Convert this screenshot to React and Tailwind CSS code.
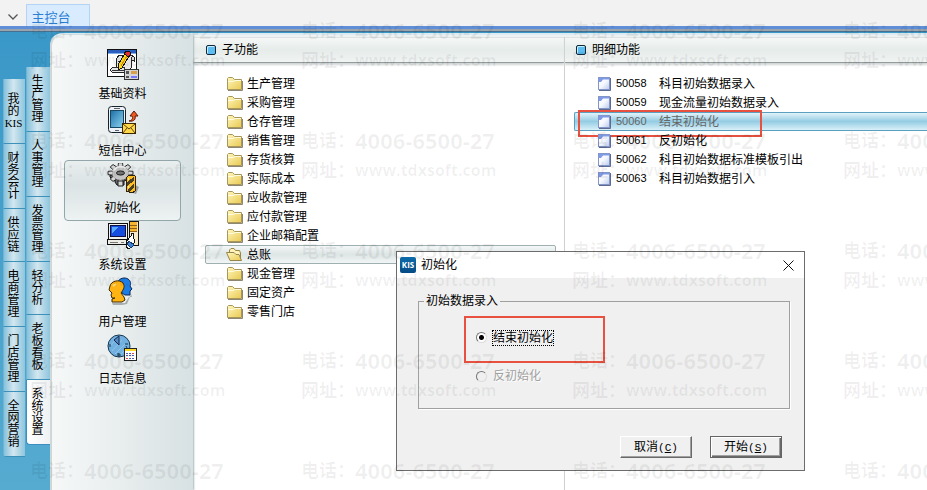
import React from "react";

const outerTabs = [
  ["我", "的", "KIS"],
  ["财", "务", "会", "计"],
  ["供", "应", "链"],
  ["电", "商", "管", "理"],
  ["门", "店", "管", "理"],
  ["全", "网", "营", "销"],
];

const innerTabs = ["生产管理", "人事管理", "发票管理", "轻分析", "老板看板", "系统设置"];

const folders = [
  "生产管理", "采购管理", "仓存管理", "销售管理", "存货核算", "实际成本", "应收款管理",
  "应付款管理", "企业邮箱配置", "总账", "现金管理", "固定资产", "零售门店",
];

const details = [
  ["50058", "科目初始数据录入"],
  ["50059", "现金流量初始数据录入"],
  ["50060", "结束初始化"],
  ["50061", "反初始化"],
  ["50062", "科目初始数据标准模板引出"],
  ["50063", "科目初始数据引入"],
];

function BasicDataIcon() {
  return (
    <svg width="32" height="32" viewBox="0 0 32 32" shapeRendering="crispEdges">
      <rect x="0.5" y="0.5" width="29" height="27" fill="#fff" stroke="#111" />
      <rect x="1" y="1" width="28" height="3" fill="#2a5fc0" />
      <path d="M1 4.500H29" stroke="#86aee6" />
      <path d="M12 6H24L27 8V12L24 11V19L21 23H5L3 21L6 18H9V11Z" fill="#e6e6e6" stroke="#222" />
      <path d="M6 18H18L17 21H5M24 11V8M11 12H14M11 15H13" fill="none" stroke="#333" />
      <path d="M18 4L22 7L15 19L11 21V16Z" fill="#ffdc18" stroke="#111" />
      <path d="M20 7L14 17" stroke="#e48f10" />
      <path d="M19 2H22L24 4L22 8L17 5Z" fill="#e03030" stroke="#111" />
      <rect x="17.500" y="20.500" width="14" height="10" fill="#d4d4d4" stroke="#333" />
      <rect x="19" y="22" width="3" height="3" fill="#555" />
      <rect x="24" y="22" width="6" height="3" fill="#d9a04a" />
      <rect x="19" y="27" width="3" height="2" fill="#555" />
      <rect x="24" y="27" width="6" height="2" fill="#7777ff" />
    </svg>
  );
}

function MessageIcon() {
  return (
    <svg width="32" height="32" viewBox="0 0 32 32">
      <defs>
        <linearGradient id="phoneScreen" x1="0" y1="0" x2="1" y2="1">
          <stop offset="0" stopColor="#1b6fa6" />
          <stop offset="1" stopColor="#8fd4f2" />
        </linearGradient>
      </defs>
      <rect x="1.500" y=".500" width="17" height="26" rx="3" fill="#eef2f6" stroke="#18222c" />
      <rect x="3.500" y="4.500" width="13" height="17" fill="url(#phoneScreen)" stroke="#174663" />
      <path d="M7 2.500H13M8 24.500H12" stroke="#59636d" />
      <path d="M22 15C26 14 26 12 25 10H23L27 5L31 10H28C29 13 27 16 22 15Z" fill="#f05a1a" stroke="#5d1808" />
      <rect x="15.500" y="17.500" width="13" height="10" fill="#ffd84a" stroke="#3b2604" />
      <path d="M16 18L22 23L28 18M16 27L20 22M28 27L24 22" fill="none" stroke="#62430b" />
    </svg>
  );
}

const gearTeeth = [0, 45, 90, 135, 180, 225, 270, 315];

function GearIcon() {
  return (
    <svg width="32" height="32" viewBox="0 0 32 32">
      <path d="M24 20L32 24L29 31L23 29Z" fill="#99a2a5" />
      <path d="M3 12V14L6 17L8 16V19L10 22H17V18L25 15V12Z" fill="#666" stroke="#111" />
      <g transform="translate(13.500 10) scale(1 .82)">
        {gearTeeth.map((angle) => (
          <path key={angle} transform={`rotate(${angle})`} d="M-2.500 -8L-2 -12.500H2L2.500 -8Z" fill="#d6d6d6" stroke="#222" />
        ))}
        <circle r="8.500" fill="#c4c4c4" />
        <path d="M-7 -3A8 8 0 0 1 5 -6" fill="none" stroke="#f0f0f0" strokeWidth="2" />
        <ellipse rx="4" ry="2.500" fill="#777" stroke="#111" />
      </g>
      <path d="M11 18H16V23H11Z" fill="#d4d4d4" stroke="#222" />
      <g shapeRendering="crispEdges">
        <path d="M19 15L22 12L28 13V28L25 30L19 28Z" fill="#ffbd24" stroke="#2c210b" />
        <path d="M20 19L27 14V18L20 23ZM20 27L27 21V25L22 29Z" fill="#4c3e25" />
        <path d="M21.500 15V17M21.500 23V25" stroke="#fff08a" />
      </g>
    </svg>
  );
}

function ComputerIcon() {
  return (
    <svg width="32" height="32" viewBox="0 0 32 32" shapeRendering="crispEdges">
      <path d="M22 1H31V25H22Z" fill="#f5e9ca" stroke="#161616" />
      <path d="M23 2H30V12H23Z" fill="#f7b52f" />
      <path d="M23 5.500H30M23 8.500H30M23 11.500H30" stroke="#8c5d13" />
      <rect x="1.500" y="3.500" width="19" height="16" fill="#f2f2ec" stroke="#111" />
      <rect x="3.500" y="5.500" width="15" height="11" fill="#164fe0" stroke="#101044" />
      <path d="M5 7H12L5 13Z" fill="#54a8ff" />
      <rect x="0.500" y="19.500" width="19" height="5" fill="#ecece5" stroke="#111" />
      <path d="M3 22.500H11M14 22.500H17" stroke="#777" />
      <path d="M24 13V16L22 18L19 23V27L22 29L26 26L28 20L26 18V13Z" fill="#fff" stroke="#111" />
      <path d="M22 21L27 25L24 28L20 24Z" fill="#4388dd" stroke="#163b67" />
    </svg>
  );
}

function UsersIcon() {
  return (
    <svg width="32" height="32" viewBox="0 0 32 32">
      <path d="M5 26H18L22 20H25L24 17L22 22L20 27L15 28H6Z" fill="#8b9496" opacity=".7" />
      <path d="M11 5C12 1 18 0 21 2C24 4 24 7 23 9L25 12L23 14V18H18L15 16Z" fill="#1c7de4" stroke="#0b2656" />
      <path d="M3 9C4 4 12 2 16 6C18 9 17 12 14 16L17 20L18 23L15 25H5V22L8 21H5L4 18L5 16L2 13Z" fill="#ffb414" stroke="#3d2a04" />
      <path d="M6 9L9 7" stroke="#ffe184" strokeWidth="2" />
    </svg>
  );
}

function LogIcon() {
  return (
    <svg width="32" height="32" viewBox="0 0 32 32">
      <circle cx="12" cy="12" r="11" fill="#72b1df" stroke="#17364f" />
      <path d="M4 11L10 4M8 20L18 10M5 17L15 6M12 22L20 14" stroke="#8fc3e8" />
      <path d="M12 2V11L7 6Z" fill="#5687c2" stroke="#13294f" />
      <path d="M3 10V13M18 10H21M19 12L20 14M11 19V22H13V20H11" fill="none" stroke="#15354f" />
      <g shapeRendering="crispEdges">
        <rect x="17.500" y="14.500" width="12" height="12" fill="#fff" stroke="#222" />
        <rect x="18" y="15" width="11" height="2" fill="#ffd82a" />
        <path d="M19 19.500H28M19 21.500H28M19 24.500H28" stroke="#4e5db0" strokeDasharray="2 1" />
        <path d="M25 19.500H27M19 24.500H21" stroke="#e34848" />
      </g>
    </svg>
  );
}

const modules = [
  ["基础资料", BasicDataIcon],
  ["短信中心", MessageIcon],
  ["初始化", GearIcon],
  ["系统设置", ComputerIcon],
  ["用户管理", UsersIcon],
  ["日志信息", LogIcon],
];

function FolderIcon({ open }) {
  return (
    <svg className="shrink-0" width="17" height="15" viewBox="0 0 17 15">
      <defs>
        <linearGradient id="folderFill" x1="0" y1="0" x2="1" y2="1">
          <stop offset="0" stopColor="#fff7bd" />
          <stop offset="1" stopColor="#e9c951" />
        </linearGradient>
      </defs>
      {open ? (
        <>
          <path d="M3.500 8V3L5 1.500H8L9.500 3.500H13.500L14.500 6V13H5Z" fill="#fff3b8" stroke="#96854a" />
          <path d="M.5 5.500H8L10 7.500H13L15.500 13.500H4Z" fill="url(#folderFill)" stroke="#96854a" />
        </>
      ) : (
        <>
          <path d="M1.500 13.500V2.500L2.500 1.500H6.500L8.500 3.500H15.500V13.500Z" fill="url(#folderFill)" stroke="#a8975a" />
          <path d="M2 5.500H7L9 4.500H15" fill="none" stroke="#fffbe0" />
          <path d="M2 14.500H16.500V5" fill="none" stroke="#8c8672" />
        </>
      )}
    </svg>
  );
}

function DocumentIcon() {
  return (
    <svg className="shrink-0" width="13" height="14" viewBox="0 0 13 14">
      <defs>
        <linearGradient id="docFill" x1="0" y1="0" x2="1" y2="1">
          <stop offset="0" stopColor="#ffffff" />
          <stop offset=".5" stopColor="#f5f8ff" />
          <stop offset="1" stopColor="#b9c8ea" />
        </linearGradient>
      </defs>
      <rect x=".5" y=".5" width="11" height="12" fill="url(#docFill)" stroke="#8496c8" />
      <path d="M1 1H11V2.500H5L3 5H1Z" fill="#7f9ae6" />
      <path d="M1 13.500H12.500V1" fill="none" stroke="#5c6a94" />
    </svg>
  );
}

function PaneHeader({ inset, children }) {
  return (
    <h2 className={`flex h-[26px] items-center gap-[6px] border-t border-b border-t-[#dde3e3] border-b-[#939b9b] bg-linear-to-b from-[#f4f7f6] via-[#e6ecea] to-[#f0f4f3] text-xs shadow-[0_2px_2px_#cfd5d5] ${inset}`}>
      <span className="size-[10px] rounded-xs border border-[#10283c] bg-[#5ebdf0] shadow-[inset_1px_1px_0_#c5ecff]" />
      {children}
    </h2>
  );
}

function ClassicRadio({ label, name, checked, disabled }) {
  return (
    <label className={`flex h-4 w-fit items-center gap-[6px] text-xs leading-4 ${disabled ? "text-[#a0a0a0]" : "text-black"}`}>
      <input
        type="radio"
        name={name}
        defaultChecked={checked}
        disabled={disabled}
        className="size-[11px] appearance-none rounded-full border border-t-[#777] border-r-[#dcdcdc] border-b-[#dcdcdc] border-l-[#777] bg-white checked:bg-[radial-gradient(circle,#000_2px,transparent_3px)] disabled:bg-[#f0f0f0]"
      />
      <span className={checked ? "leading-[14px] outline-1 outline-dotted outline-black" : "[text-shadow:1px_1px_#fff]"}>{label}</span>
    </label>
  );
}

function AccessKey({ children }) {
  return (
    <span className="font-['Liberation_Mono',monospace] text-[11px]">(<u>{children}</u>)</span>
  );
}

function InitDialog() {
  return (
    <section
      role="dialog"
      aria-labelledby="dialog-title"
      className="absolute top-[251px] left-[396px] w-[409px] border border-[#6c6c6c] bg-[#f0f0f0] pb-3"
    >
      <header className="flex h-[26px] items-center bg-white pl-[3px] text-xs">
        <span className="flex size-4 items-center justify-center rounded-xs bg-linear-to-b from-[#0d6cab] to-[#054a85] font-['Open_Sans',sans-serif] text-[8px] font-bold text-white">KIS</span>
        <h1 id="dialog-title" className="ml-[5px] flex-1">初始化</h1>
        <button aria-label="关闭" className="flex h-6 w-[31px] items-center justify-center">
          <svg width="11" height="11" viewBox="0 0 11 11">
            <path d="M.5 .5L10.500 10.500M10.500 .5L.5 10.500" stroke="#111" />
          </svg>
        </button>
      </header>
      <fieldset className="mt-[15px] mr-[14px] ml-[21px] border border-[#a0a0a0] pb-6 shadow-[1px_1px_0_#fff]">
        <legend className="ml-[5px] px-[2px] text-xs leading-4">初始数据录入</legend>
        <div className="mt-[7px] ml-[45px] flex h-[47px] w-[141px] items-center border-2 border-[#e8513f] pb-1 pl-[10px]">
          <ClassicRadio label="结束初始化" name="mode" checked />
        </div>
        <div className="mt-[5px] ml-[57px]">
          <ClassicRadio label="反初始化" name="mode" disabled />
        </div>
      </fieldset>
      <div className="mt-[27px] mr-[22px] flex justify-end gap-[18px] text-xs">
        <button className="h-[22px] w-[72px] border border-t-white border-r-[#696969] border-b-[#696969] border-l-white bg-[#f0f0f0] shadow-[inset_-1px_-1px_#a0a0a0]">
          取消<AccessKey>C</AccessKey>
        </button>
        <button className="h-[22px] w-[72px] border border-[#646464] bg-[#f0f0f0] shadow-[inset_1px_1px_#fff,inset_-1px_-1px_#696969,inset_-2px_-2px_#a0a0a0]">
          开始<AccessKey>S</AccessKey>
        </button>
      </div>
    </section>
  );
}

function Watermark() {
  return (
    <div aria-hidden="true" className="pointer-events-none absolute inset-0 z-20 overflow-hidden pt-[15px] pl-[30px] text-black/6">
      <div className="grid w-max grid-cols-[repeat(4,271px)]">
        {Array.from({ length: 20 }, (_, i) => (
          <div key={i} className="h-[110px] whitespace-nowrap">
            <p className="flex h-[30px] items-center font-['Open_Sans','Noto_Sans_CJK_SC',sans-serif] text-[22px] font-bold"><span className="w-[54px] text-lg">电话：</span>4006-6500-27</p>
            <p className="flex h-[30px] items-center font-['Open_Sans','Noto_Sans_CJK_SC',sans-serif] text-base font-bold"><span className="w-[54px] text-lg">网址：</span>www.tdxsoft.com</p>
          </div>
        ))}
      </div>
    </div>
  );
}

export default function App() {
  return (
    <div className="relative flex min-h-screen flex-col overflow-hidden bg-[#3f9cca] font-['Liberation_Sans','Noto_Sans_CJK_SC',sans-serif] text-black">
      <header className="flex h-[26px] items-end bg-[#f2f2f2]">
        <button aria-label="更多" className="flex h-[18px] w-[26px] items-center justify-center">
          <svg width="10" height="6" viewBox="0 0 10 6">
            <path d="M.5 .5L5 5L9.500 .5" fill="none" stroke="#555" strokeWidth="1.300" />
          </svg>
        </button>
        <button className="h-[22px] w-16 border border-b-0 border-[#b4d3f5] bg-[#d9ebff] pt-1 pr-[14px] text-[13px] leading-4 text-[#2b7fd4]">主控台</button>
      </header>
      <div className="h-[6px] border-t-3 border-b-1 border-t-[#608fd8] border-b-[#48708e] bg-[#9aa4ae]" />

      <div className="flex flex-1 bg-linear-to-b from-[#3a98c8] to-[#55abd0]">
        <nav className="flex w-[50px] items-start pl-[3px] text-xs leading-3">
          <div className="w-[23px] overflow-hidden rounded-l-sm pt-[47px]">
            {outerTabs.map((chars, i) => (
              <button
                key={i}
                className={`flex w-[22px] flex-col items-center justify-center border-b border-l border-b-[#3d91b9] border-l-[#6fb4d3] bg-linear-to-r from-[#86c1dc] via-[#d3e7ef] via-45% to-[#8ec5dd] py-2 pr-[2px] ${i === 0 ? "h-[65px]" : ""}`}
              >
                {chars.map((c, j) => (
                  <span key={j} className={c === "KIS" ? "font-['Liberation_Serif',serif] text-[11px]" : ""}>{c}</span>
                ))}
              </button>
            ))}
          </div>
          <div className="w-6 pt-[35px]">
            {innerTabs.map((tab, i) => (
              <button
                key={tab}
                className={`flex w-full flex-col items-center border-b border-l py-2 pr-[2px] ${
                  i === 5
                    ? "rounded-bl-sm border-[#3d8fc0] bg-linear-to-r from-white to-[#eef2f3]"
                    : "border-b-[#3d91b9] border-l-[#6fb4d3] bg-linear-to-r from-[#86c1dc] via-[#d3e7ef] via-45% to-[#8ec5dd]"
                }`}
              >
                {tab.split("").map((c, j) => (
                  <span key={j}>{c}</span>
                ))}
              </button>
            ))}
          </div>
        </nav>

        <div className="mt-px flex flex-1 rounded-tl-xl border-t-2 border-l-2 border-t-[#dcecf2] border-l-[#d0d8da] bg-[#eef2f2]">
          <nav className="z-1 flex w-[141px] flex-col items-center -space-y-1 rounded-tl-xl bg-linear-to-r from-[#f6f8f8] via-[#e8eded] to-[#d7e1e3] pt-[11px] shadow-[1px_0_2px_#a9b7b9]">
            {modules.map(([label, Icon]) => (
              <button
                key={label}
                className={`flex h-[61px] w-[117px] shrink-0 flex-col items-center rounded-sm border pt-[2px] text-xs leading-[18px] ${
                  label === "初始化" ? "border-[#93a6a9] bg-linear-to-b from-[#e9eeee] via-[#dbe3e4] via-40% to-[#edf2f2]" : "border-transparent"
                }`}
              >
                <Icon />
                <span className="mt-1">{label}</span>
              </button>
            ))}
          </nav>

          <main className="mt-[2px] flex flex-1 bg-white">
            <section className="w-[372px] border-r border-[#d0d0d0]">
              <PaneHeader inset="pl-[13px]">子功能</PaneHeader>
              <ul className="mt-[11px] pr-2 pl-3">
                {folders.map((name) => (
                  <li key={name}>
                    <button
                      className={`flex h-[19px] w-full items-center gap-1 rounded-xs border pl-5 text-xs ${
                        name === "总账" ? "border-[#9fb0b0] bg-linear-to-b from-[#f4f7f7] via-[#dde5e5] to-[#f2f5f5]" : "border-transparent"
                      }`}
                    >
                      <FolderIcon open={name === "总账"} />
                      {name}
                    </button>
                  </li>
                ))}
              </ul>
            </section>
            <section className="flex-1">
              <PaneHeader inset="pl-[11px]">明细功能</PaneHeader>
              <ul className="mt-[11px] pl-[9px]">
                {details.map(([code, name]) => (
                  <li key={code} className="relative">
                    <button
                      className={`flex h-[19px] w-full items-center rounded-l-xs border border-r-0 pl-[23px] text-xs ${
                        code === "50060"
                          ? "border-[#5a9fc0] bg-linear-to-b from-[#e2f3fa] via-[#94cce3] to-[#d9f0f8] text-[#666]"
                          : "border-transparent"
                      }`}
                    >
                      <DocumentIcon />
                      <span className="ml-[5px] w-[43px] text-left text-[11px]">{code}</span>
                      {name}
                    </button>
                    {code === "50060" && (
                      <span className="pointer-events-none absolute -top-[2px] left-1 h-[27px] w-[184px] border-2 border-[#e8513f]" />
                    )}
                  </li>
                ))}
              </ul>
            </section>
          </main>
        </div>
      </div>

      <InitDialog />
      <Watermark />
    </div>
  );
}
